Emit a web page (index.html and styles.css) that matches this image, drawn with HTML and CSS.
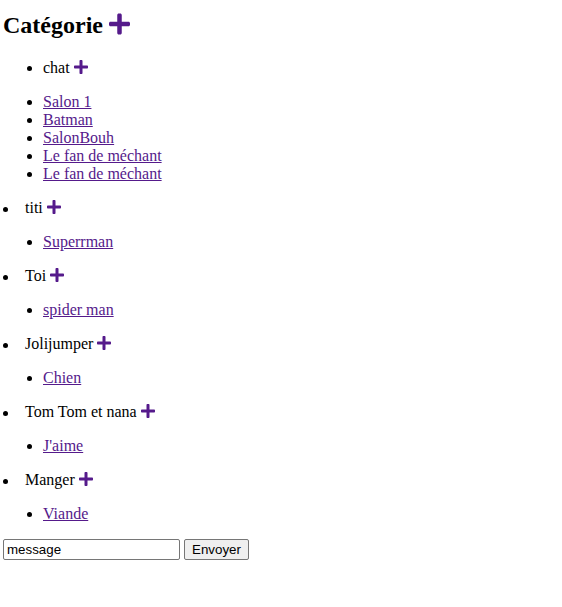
FILE: index.html
```html
<!DOCTYPE html>
<html lang="fr">
<head>
<meta charset="utf-8">
<title>Catégorie</title>
<link rel="stylesheet" href="styles.css">
</head>
<body>
<h2 class="title">Catégorie <a class="add" href="#"><svg class="plus" viewBox="0 0 448 512" aria-hidden="true"><path d="M416 208H272V64c0-17.67-14.33-32-32-32h-32c-17.67 0-32 14.33-32 32v144H32c-17.67 0-32 14.33-32 32v32c0 17.67 14.33 32 32 32h144v144c0 17.67 14.33 32 32 32h32c17.67 0 32-14.33 32-32V304h144c17.67 0 32-14.33 32-32v-32c0-17.67-14.33-32-32-32z"/></svg></a></h2>

<ul class="sub"><li>chat <a class="add" href="#"><svg class="plus" viewBox="0 0 448 512" aria-hidden="true"><path d="M416 208H272V64c0-17.67-14.33-32-32-32h-32c-17.67 0-32 14.33-32 32v144H32c-17.67 0-32 14.33-32 32v32c0 17.67 14.33 32 32 32h144v144c0 17.67 14.33 32 32 32h32c17.67 0 32-14.33 32-32V304h144c17.67 0 32-14.33 32-32v-32c0-17.67-14.33-32-32-32z"/></svg></a></li></ul>
<ul class="sub">
  <li><a class="room" href="#">Salon 1</a></li>
  <li><a class="room" href="#">Batman</a></li>
  <li><a class="room" href="#">SalonBouh</a></li>
  <li><a class="room" href="#">Le fan de méchant</a></li>
  <li><a class="room" href="#">Le fan de méchant</a></li>
</ul>

<ul class="cats">
  <li class="cat">titi <a class="add" href="#"><svg class="plus" viewBox="0 0 448 512" aria-hidden="true"><path d="M416 208H272V64c0-17.67-14.33-32-32-32h-32c-17.67 0-32 14.33-32 32v144H32c-17.67 0-32 14.33-32 32v32c0 17.67 14.33 32 32 32h144v144c0 17.67 14.33 32 32 32h32c17.67 0 32-14.33 32-32V304h144c17.67 0 32-14.33 32-32v-32c0-17.67-14.33-32-32-32z"/></svg></a>
    <ul class="sub"><li><a class="room" href="#">Superrman</a></li></ul>
  </li>
  <li class="cat">Toi <a class="add" href="#"><svg class="plus" viewBox="0 0 448 512" aria-hidden="true"><path d="M416 208H272V64c0-17.67-14.33-32-32-32h-32c-17.67 0-32 14.33-32 32v144H32c-17.67 0-32 14.33-32 32v32c0 17.67 14.33 32 32 32h144v144c0 17.67 14.33 32 32 32h32c17.67 0 32-14.33 32-32V304h144c17.67 0 32-14.33 32-32v-32c0-17.67-14.33-32-32-32z"/></svg></a>
    <ul class="sub"><li><a class="room" href="#">spider man</a></li></ul>
  </li>
  <li class="cat">Jolijumper <a class="add" href="#"><svg class="plus" viewBox="0 0 448 512" aria-hidden="true"><path d="M416 208H272V64c0-17.67-14.33-32-32-32h-32c-17.67 0-32 14.33-32 32v144H32c-17.67 0-32 14.33-32 32v32c0 17.67 14.33 32 32 32h144v144c0 17.67 14.33 32 32 32h32c17.67 0 32-14.33 32-32V304h144c17.67 0 32-14.33 32-32v-32c0-17.67-14.33-32-32-32z"/></svg></a>
    <ul class="sub"><li><a class="room" href="#">Chien</a></li></ul>
  </li>
  <li class="cat">Tom Tom et nana <a class="add" href="#"><svg class="plus" viewBox="0 0 448 512" aria-hidden="true"><path d="M416 208H272V64c0-17.67-14.33-32-32-32h-32c-17.67 0-32 14.33-32 32v144H32c-17.67 0-32 14.33-32 32v32c0 17.67 14.33 32 32 32h144v144c0 17.67 14.33 32 32 32h32c17.67 0 32-14.33 32-32V304h144c17.67 0 32-14.33 32-32v-32c0-17.67-14.33-32-32-32z"/></svg></a>
    <ul class="sub"><li><a class="room" href="#">J'aime</a></li></ul>
  </li>
  <li class="cat">Manger <a class="add" href="#"><svg class="plus" viewBox="0 0 448 512" aria-hidden="true"><path d="M416 208H272V64c0-17.67-14.33-32-32-32h-32c-17.67 0-32 14.33-32 32v144H32c-17.67 0-32 14.33-32 32v32c0 17.67 14.33 32 32 32h144v144c0 17.67 14.33 32 32 32h32c17.67 0 32-14.33 32-32V304h144c17.67 0 32-14.33 32-32v-32c0-17.67-14.33-32-32-32z"/></svg></a>
    <ul class="sub"><li><a class="room" href="#">Viande</a></li></ul>
  </li>
</ul>

<form class="send" action="#">
  <input class="msg" type="text" value="message"> <button class="btn" type="button">Envoyer</button>
</form>
</body>
</html>
```
FILE: styles.css
```css
html {
  background: #fff;
}
body {
  margin: 0 3px;
  font-family: "Liberation Serif", "Times New Roman", serif;
  font-size: 16px;
  color: #000;
}
.title {
  font-size: 24px;
  font-weight: bold;
  margin: 11.6px 0 19.92px;
}
.add {
  color: #551a8b;
}
.plus {
  width: 0.875em;
  height: 1em;
  vertical-align: -0.125em;
  fill: currentColor;
  overflow: visible;
}
.sub {
  margin: 16px 0;
  padding-left: 40px;
  list-style: disc;
}
.room {
  color: #551a8b;
  text-decoration: underline;
}
.cats {
  list-style: none;
  margin: 0;
  padding: 0;
}
.cat::before {
  content: "";
  display: inline-block;
  width: 5px;
  height: 5px;
  border-radius: 50%;
  background: currentColor;
  margin-right: 17px;
  vertical-align: 1px;
}
.send {
  margin: 0;
}
.msg {
  box-sizing: border-box;
  width: 177px;
  height: 21px;
  margin: 0;
  padding: 1px 3px;
  border: 1px solid #767676;
  border-radius: 2px;
  font-family: "Liberation Sans", Arial, sans-serif;
  font-size: 13.33px;
  color: #000;
  background: #fff;
}
.btn {
  box-sizing: border-box;
  height: 21px;
  margin: 0;
  padding: 1px 7px;
  border: 1px solid #767676;
  border-radius: 2px;
  background: #efefef;
  font-family: "Liberation Sans", Arial, sans-serif;
  font-size: 13.33px;
  color: #000;
}
```
